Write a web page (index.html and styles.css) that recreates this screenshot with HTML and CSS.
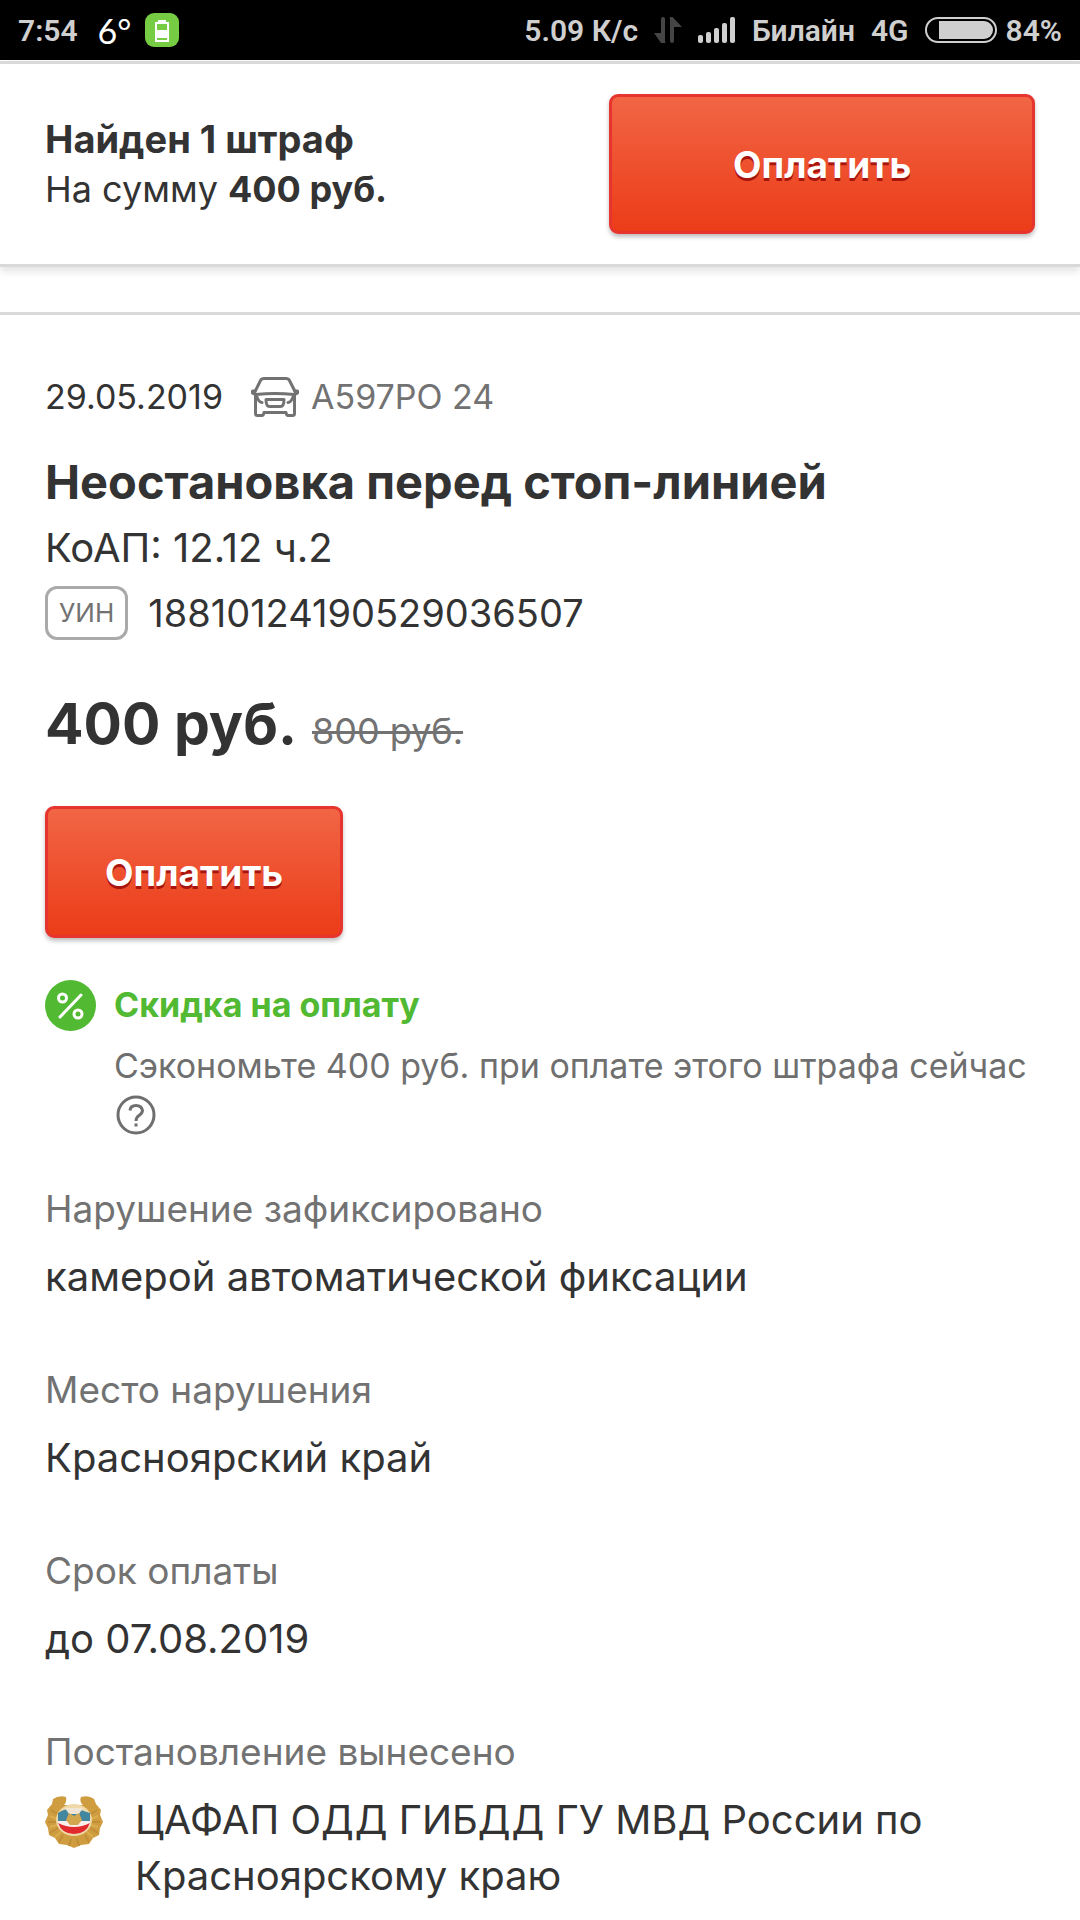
FILE: index.html
```html
<!DOCTYPE html>
<html lang="ru">
<head>
  <meta charset="UTF-8">
  <meta name="viewport" content="width=device-width">
  <title>Штрафы ГИБДД</title>
  <link rel="stylesheet" href="styles.css">
</head>
<body>
  <div class="status">
    <span>7:54</span>
    <span class="status-temp">6°</span>
    <svg class="status-app" width="34" height="34" viewBox="0 0 34 34">
      <rect width="34" height="34" rx="9" fill="#76cd43"/>
      <path d="M13 7h8v2h-8z" fill="#fff"/>
      <rect x="11" y="10" width="12" height="18" fill="none" stroke="#fff" stroke-width="2"/>
      <path d="M12 17h10v8H12z" fill="#fff"/>
    </svg>
    <div class="status-right">
      <span>5.09 К/с</span>
      <svg width="28" height="26" viewBox="0 0 28 26" fill="#454545">
        <path d="M7 2a2 2 0 0 1 4 0v22a2 2 0 0 1-4 2L0 16h7z"/>
        <path d="M16 2a1.500 1.500 0 0 1 3-1.500L28 10h-8v14a2 2 0 0 1-4 0z"/>
      </svg>
      <svg width="38" height="26" viewBox="0 0 38 26" fill="#cfcfcf">
        <rect x="0" y="18" width="5" height="8" rx="2"/>
        <rect x="8" y="15" width="5" height="11" rx="2"/>
        <rect x="16" y="11" width="5" height="15" rx="2"/>
        <rect x="24" y="6" width="5" height="20" rx="2"/>
        <rect x="32" y="0" width="5" height="26" rx="2"/>
      </svg>
      <span>Билайн</span>
      <span>4G</span>
      <div class="status-battery">
        <svg width="72" height="26" viewBox="0 0 72 26">
          <rect x="1" y="1" width="70" height="24" rx="12" fill="none" stroke="#cfcfcf" stroke-width="2"/>
          <path d="M14 4h45a9 9 0 0 1 0 18H14z" fill="#cfcfcf"/>
        </svg>
        <span>84%</span>
      </div>
    </div>
  </div>

  <header class="header">
    <div>
      <div class="header-found">Найден 1 штраф</div>
      <div class="header-sum">На сумму <b>400 руб.</b></div>
    </div>
    <button class="btn btn-header">Оплатить</button>
  </header>

  <main class="fine">
    <div class="meta">
      <span>29.05.2019</span>
      <span class="car">
        <svg width="48" height="40" viewBox="0 0 48 40" fill="none" stroke="#727272" stroke-width="3" stroke-linecap="round" stroke-linejoin="round">
          <path d="M4 14.500L9.500 3.500Q10.500 1.500 13 1.500h22Q37.500 1.500 38.500 3.500L44 14.500"/>
          <path d="M1.500 14H4M44 14h2.500M1.500 14V16L5 17.500Q24 15.500 43 17.500L46.500 16V14"/>
          <path d="M4.500 18V36.500Q4.500 38.500 6.500 38.500H11Q12.500 38.500 13 35.500H35Q35.500 38.500 37 38.500H41.500Q43.500 38.500 43.500 36.500V18"/>
          <path d="M15 22.500H33Q33 29.500 29.500 29.500H18.500Q15 29.500 15 22.500z"/>
          <path d="M6 20Q8 25.500 11 25.500M42 20Q40 25.500 37 25.500"/>
        </svg>
        А597РО 24
      </span>
    </div>
    <h1>Неостановка перед стоп-линией</h1>
    <div class="koap">КоАП: 12.12 ч.2</div>
    <div class="uin"><span class="uin-tag">УИН</span>18810124190529036507</div>
    <div class="price"><b>400 руб.</b><s>800 руб.</s></div>
    <button class="btn">Оплатить</button>

    <div class="discount">
      <svg width="51" height="51" viewBox="0 0 51 51">
        <circle cx="25.500" cy="25.500" r="25.500" fill="#51b932"/>
        <g fill="none" stroke="#fff" stroke-width="3" stroke-linecap="round">
          <circle cx="17.500" cy="18" r="4"/>
          <circle cx="33" cy="34" r="4"/>
          <path d="M36 15L15 37"/>
        </g>
      </svg>
      <div>
        <div class="discount-title">Скидка на оплату</div>
        <div class="discount-text">
          Сэкономьте 400 руб. при оплате этого штрафа сейчас
          <button class="help" aria-label="Подробнее">
            <svg width="40" height="40" viewBox="0 0 40 40" fill="none" stroke="#6f6f6f" stroke-width="3">
              <circle cx="20" cy="20" r="18"/>
              <path d="M14 15.500Q14.500 10.500 20 10.500T26.500 15.500Q26.500 18 23 20.500Q20 22.500 20 26"/>
              <path d="M20 28.500v3"/>
            </svg>
          </button>
        </div>
      </div>
    </div>

    <dl class="details">
      <div>
        <dt>Нарушение зафиксировано</dt>
        <dd>камерой автоматической фиксации</dd>
      </div>
      <div>
        <dt>Место нарушения</dt>
        <dd>Красноярский край</dd>
      </div>
      <div>
        <dt>Срок оплаты</dt>
        <dd>до 07.08.2019</dd>
      </div>
      <div>
        <dt>Постановление вынесено</dt>
        <dd class="issuer">
          <svg width="58" height="52" viewBox="0 0 58 52">
            <path d="M8 3Q14 -1 21 1Q22 6 19 9H38Q34 6 36 1Q44 -1 49 3L51 8L56 14L55 19L58 26L55 32L54 39L48 42L44 48L36 49L29 52L22 49L14 48L10 42L4 39L3 32L0 26L3 19L2 14L7 8z" fill="#cf9d3f"/>
            <path d="M6 14l6 4M3 26h8M5 37l8-5M14 46l4-7M24 50l2-7M52 14l-6 4M55 26h-8M53 37l-8-5M44 46l-4-7M34 50l-2-7" stroke="#c18e38" stroke-width="2"/>
            <path d="M5 20l7 3M5 31l7-2M10 41l6-5M53 20l-7 3M53 31l-7-2M48 41l-6-5" stroke="#dbae50" stroke-width="2"/>
            <ellipse cx="29" cy="24" rx="18" ry="16" fill="#efd9a8"/>
            <path d="M13 17Q21 12 29 13T45 17V26H13z" fill="#4386a0"/>
            <path d="M20 12h18l-4 6H24z" fill="#f0e4d4"/>
            <path d="M13 25H45V29Q40 34 29 34T13 29z" fill="#faeeea"/>
            <path d="M13 27Q29 35 45 27Q41 38 29 38Q17 38 13 27z" fill="#e12a2e"/>
            <path d="M21 24L24 17L29 20L34 17L37 24L33 29H25z" fill="#d2a64e"/>
          </svg>
          <span>ЦАФАП ОДД ГИБДД ГУ МВД России по Красноярскому краю</span>
        </dd>
      </div>
    </dl>
  </main>
</body>
</html>
```
FILE: styles.css
```css
* {
  box-sizing: border-box;
}

body {
  margin: 0;
  background: #fff;
  color: #333;
  font-family: Inter, "Liberation Sans", sans-serif;
  font-size: 40px;
}

svg {
  display: block;
  flex-shrink: 0;
}

/* status bar */
.status {
  display: flex;
  align-items: center;
  height: 60px;
  padding: 0 18px;
  background: #000;
  color: #cfcfcf;
  font: 600 30px Roboto, sans-serif;
}

.status-temp {
  margin: 0 14px 0 20px;
  color: #fff;
  font: 400 34px Lato, sans-serif;
}

.status-right {
  display: flex;
  align-items: center;
  gap: 16px;
  margin-left: auto;
}

.status-battery {
  display: flex;
  align-items: center;
  gap: 9px;
}

/* header */
.header {
  display: flex;
  align-items: center;
  justify-content: space-between;
  height: 206px;
  margin: 1px 0 45px;
  padding: 0 45px;
  border-top: 3px solid #d9d9d9;
  border-bottom: 3px solid #d9d9d9;
  box-shadow: 0 4px 9px rgba(0, 0, 0, 0.12);
}

.header-found {
  font-size: 38px;
  font-weight: 700;
  line-height: 50px;
}

.header-sum {
  font-size: 36px;
  line-height: 50px;
}

.btn {
  height: 132px;
  padding: 0 57px;
  border: 3px solid #e6352f;
  border-radius: 9px;
  background: linear-gradient(#f16545, #ec3c18);
  box-shadow: 0 3px 4px rgba(0, 0, 0, 0.25);
  color: #fff;
  font: 700 37px Inter, sans-serif;
  text-shadow: 0 3px 0 #a8150f;
  cursor: pointer;
}

.btn-header {
  width: 43%;
  height: 140px;
}

/* fine */
.fine {
  padding: 58px 45px 16px;
  border-top: 3px solid #d9d9d9;
}

.meta {
  display: flex;
  gap: 28px;
  font-size: 34px;
  line-height: 48px;
}

.car {
  display: flex;
  align-items: center;
  gap: 12px;
  color: #727272;
}

h1 {
  margin: 29px 0 8px;
  font-size: 47px;
  font-weight: 700;
  line-height: 64px;
}

.koap {
  line-height: 52px;
}

.uin {
  display: flex;
  align-items: center;
  gap: 20px;
  margin: 12px 0 46px;
  font-size: 38px;
  line-height: 52px;
}

.uin-tag {
  padding: 0 11px;
  border: 3px solid #aaa;
  border-radius: 12px;
  color: #727272;
  font-size: 26px;
  line-height: 48px;
}

.price {
  display: flex;
  align-items: baseline;
  gap: 15px;
  margin-bottom: 37px;
  line-height: 76px;
}

.price b {
  font-size: 57px;
}

.price s {
  color: #727272;
  font-size: 36px;
}

.discount {
  display: flex;
  gap: 18px;
  margin: 42px 0 44px;
  font-size: 34px;
  line-height: 50px;
}

.discount-title {
  margin-bottom: 11px;
  color: #51b932;
  font-weight: 700;
}

.discount-text {
  color: #6f6f6f;
}

.help {
  margin: 4px 2px 0;
  padding: 0;
  border: 0;
  background: none;
  vertical-align: top;
  cursor: pointer;
}

/* details */
.details {
  display: grid;
  gap: 61px;
  margin: 0;
}

dt {
  margin-bottom: 16px;
  color: #727272;
  font-size: 37px;
  line-height: 48px;
}

dd {
  margin: 0;
  line-height: 56px;
}

.issuer {
  display: flex;
  gap: 32px;
}

.issuer svg {
  margin-top: 4px;
}
```
